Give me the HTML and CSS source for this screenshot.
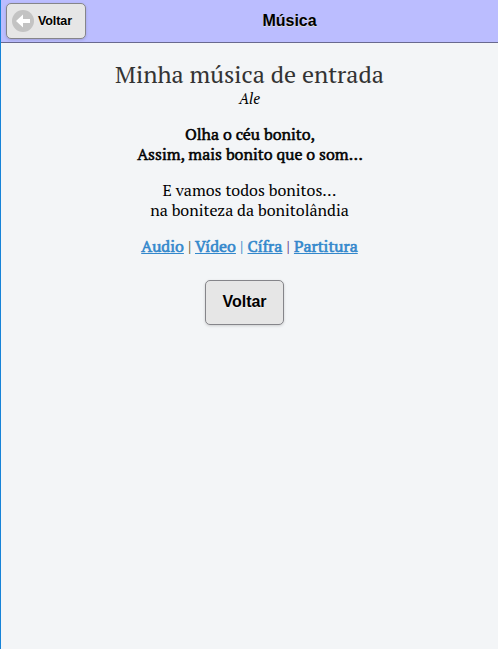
FILE: index.html
```html
<!DOCTYPE html>
<html lang="pt-BR">
<head>
<meta charset="utf-8">
<title>Música</title>
<link rel="stylesheet" href="styles.css">
</head>
<body>
<header class="bar">
  <a class="btn back" href="#"><svg class="back-icon" width="22" height="22" viewBox="0 0 22 22" aria-hidden="true"><circle cx="11" cy="11" r="11" fill="#c3c3c3"/><path d="M4 11 11 4.5V9h7v4h-7v4.5z" fill="#fff"/></svg>Voltar</a>
  <h1>Música</h1>
</header>
<main>
  <h2>Minha música de entrada</h2>
  <p class="author">Ale</p>
  <p class="chorus">Olha o céu bonito,<br>Assim, mais bonito que o som…</p>
  <p class="verse">E vamos todos bonitos…<br>na boniteza da bonitolândia</p>
  <p class="links"><a href="#">Audio</a> <i>|</i> <a href="#">Vídeo</a> <i class="blue">|</i> <a href="#">Cífra</a> <i class="violet">|</i> <a href="#">Partitura</a></p>
  <a class="btn main-btn" href="#">Voltar</a>
</main>
</body>
</html>
```
FILE: styles.css
```css
* { box-sizing: border-box; }
body {
  margin: 0;
  min-height: 649px;
  border-left: 1px solid #1683d8;
  background: #f3f5f7;
  color: #000;
  font: 16px/20px "PT Serif", "Liberation Serif", serif;
}
.bar {
  display: grid;
  grid-template-columns: 80px 1fr 5px;
  align-items: center;
  height: 43px;
  padding: 0 0 1px 5px;
  background: #bbbdff;
  border-bottom: 1px solid #69698f;
}
.bar h1 {
  margin: 0;
  text-align: center;
  font: bold 16px/20px "Liberation Sans", Arial, sans-serif;
  text-shadow: 0 1px 0 #ddd;
}
.btn {
  display: flex;
  align-items: center;
  border: 1px solid #85858a;
  border-radius: 5px;
  background: #e6e6e6;
  color: #000;
  font-family: "Liberation Sans", Arial, sans-serif;
  font-weight: bold;
  text-decoration: none;
  text-shadow: 0 1px 0 #f3f3f3;
  box-shadow: 0 1px 3px rgba(0, 0, 0, .16);
}
.back { width: 80px; height: 36px; padding-left: 5px; font-size: 12.5px; letter-spacing: -.1px; }
.back-icon { margin-right: 4px; }
main { display: flex; flex-direction: column; align-items: center; padding-top: 17px; }
p, h2 { margin: 0; text-align: center; white-space: nowrap; }
h2 { color: #333; font-size: 24px; font-weight: normal; line-height: 29px; }
.author { margin-top: -1px; font-size: 15px; font-style: italic; }
.chorus { margin-top: 16px; padding-left: 1px; -webkit-text-stroke: .5px #000; }
.verse { margin-top: 16px; }
.links { margin-top: 16px; }
.links a { color: #3388cc; text-decoration: underline; -webkit-text-stroke: .6px #3388cc; }
.links i { font-style: normal; color: #55552a; }
.links .blue { color: #2888c8; }
.links .violet { color: #653080; }
.main-btn { justify-content: center; width: 79px; height: 45px; margin: 24px 10px 0 0; padding-bottom: 2px; font-size: 16px; }
```
